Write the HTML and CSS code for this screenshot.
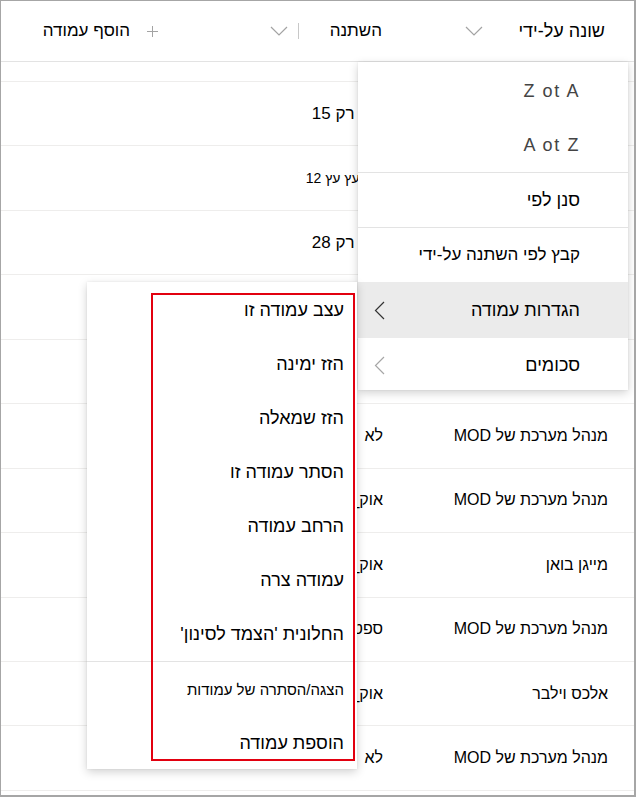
FILE: index.html
```html
<!DOCTYPE html>
<html lang="he" dir="rtl">
<head>
<meta charset="utf-8">
<title>עמודות</title>
<link rel="stylesheet" href="styles.css">
</head>
<body>
<div class="frame">
  <div class="grid">
    <div class="hrow">
      <div class="cell c1">
        <span class="htext">שונה על-ידי</span>
        <svg class="chev-down" width="18" height="10" viewBox="0 0 18 10"><path d="M1 1 L9 9 L17 1" fill="none" stroke="#a3a3a3" stroke-width="1.2"/></svg>
      </div>
      <div class="cell c2">
        <span class="htext">השתנה</span>
        <span class="fill"></span>
        <span class="vsep"></span>
        <svg class="chev-down" width="18" height="10" viewBox="0 0 18 10"><path d="M1 1 L9 9 L17 1" fill="none" stroke="#a3a3a3" stroke-width="1.2"/></svg>
      </div>
      <div class="cell c3">
        <svg class="plus" width="11" height="11" viewBox="0 0 11 11"><path d="M5.5 0 V11 M0 5.5 H11" fill="none" stroke="#a3a3a3" stroke-width="1"/></svg>
        <span class="htext">הוסף עמודה</span>
      </div>
    </div>
    <div class="row gaprow"></div>
    <div class="row"><div class="cell c1">מנהל מערכת של MOD</div><div class="cell c2 big">עוד רק 15</div><div class="cell c3"></div></div>
    <div class="row"><div class="cell c1">מנהל מערכת של MOD</div><div class="cell c2 small">עוד עץ עץ 12</div><div class="cell c3"></div></div>
    <div class="row"><div class="cell c1">מנהל מערכת של MOD</div><div class="cell c2 big">עוד רק 28</div><div class="cell c3"></div></div>
    <div class="row"><div class="cell c1">מנהל מערכת של MOD</div><div class="cell c2">לא</div><div class="cell c3"></div></div>
    <div class="row"><div class="cell c1">מנהל מערכת של MOD</div><div class="cell c2">לא</div><div class="cell c3"></div></div>
    <div class="row"><div class="cell c1">מנהל מערכת של MOD</div><div class="cell c2">לא</div><div class="cell c3"></div></div>
    <div class="row"><div class="cell c1">מנהל מערכת של MOD</div><div class="cell c2">אוק_15</div><div class="cell c3"></div></div>
    <div class="row"><div class="cell c1">מייגן בואן</div><div class="cell c2">אוק_12</div><div class="cell c3"></div></div>
    <div class="row"><div class="cell c1">מנהל מערכת של MOD</div><div class="cell c2">ספטמבר 28</div><div class="cell c3"></div></div>
    <div class="row"><div class="cell c1">אלכס וילבר</div><div class="cell c2">אוק_10</div><div class="cell c3"></div></div>
    <div class="row"><div class="cell c1">מנהל מערכת של MOD</div><div class="cell c2">לא</div><div class="cell c3"></div></div>
  </div>

  <div class="menu main-menu">
    <div class="item latin"><span class="rev">A to Z</span></div>
    <div class="item latin"><span class="rev">Z to A</span></div>
    <div class="sep"></div>
    <div class="item"><span>סנן לפי</span></div>
    <div class="sep"></div>
    <div class="item"><span class="tight">קבץ לפי השתנה על-ידי</span></div>
    <div class="item active">
      <span>הגדרות עמודה</span>
      <svg class="chev-left" width="11" height="19" viewBox="0 0 11 19"><path d="M10 1 L1.5 9.5 L10 18" fill="none" stroke="#333" stroke-width="1.2"/></svg>
    </div>
    <div class="item">
      <span>סכומים</span>
      <svg class="chev-left" width="11" height="19" viewBox="0 0 11 19"><path d="M10 1 L1.5 9.5 L10 18" fill="none" stroke="#a6a6a6" stroke-width="1.2"/></svg>
    </div>
  </div>

  <div class="menu sub-menu">
    <div class="item">עצב עמודה זו</div>
    <div class="item">הזז ימינה</div>
    <div class="item">הזז שמאלה</div>
    <div class="item">הסתר עמודה זו</div>
    <div class="item">הרחב עמודה</div>
    <div class="item">עמודה צרה</div>
    <div class="item">החלונית 'הצמד לסינון'</div>
    <div class="sep"></div>
    <div class="item small">הצגה/הסתרה של עמודות</div>
    <div class="item">הוספת עמודה</div>
    <div class="annot"></div>
  </div>
</div>
</body>
</html>
```

FILE: styles.css
```css
html, body {
  margin: 0;
  padding: 0;
  background: #ffffff;
}

.frame {
  position: relative;
  width: 636px;
  height: 797px;
  box-sizing: border-box;
  border: 1px solid #a6a6a6;
  border-right-width: 2px;
  border-bottom-width: 2px;
  overflow: hidden;
  direction: rtl;
  font-family: "Liberation Sans", "DejaVu Sans", sans-serif;
  font-size: 17px;
  color: #000;
}

.grid {
  display: flex;
  flex-direction: column;
}

.hrow {
  display: flex;
  height: 61px;
  box-sizing: border-box;
  border-bottom: 1px solid #e3e3e3;
}

.row {
  display: flex;
  height: 64.45px;
  box-sizing: border-box;
  border-bottom: 1px solid #eeedec;
  font-size: 16px;
}

.gaprow {
  height: 20px;
}

.cell {
  display: flex;
  align-items: center;
  white-space: nowrap;
  overflow: hidden;
  box-sizing: border-box;
}

.c1 {
  width: 210px;
  flex: none;
  padding-right: 26px;
  padding-left: 2px;
}

.c2 {
  width: 156px;
  flex: none;
  padding-right: 41px;
  padding-left: 2px;
}

.c3 {
  flex: 1;
}

.row .big {
  font-size: 17px;
}

.hrow .c1 {
  width: 171px;
  padding-right: 29px;
  justify-content: space-between;
  font-size: 18px;
}

.hrow .c2 {
  width: 195px;
  padding-right: 81px;
}

.hrow .c3 {
  padding-right: 110px;
}

.fill {
  flex: 1;
}

.vsep {
  width: 1px;
  height: 16px;
  background: #c8c8c8;
}

.chev-down {
  display: block;
  flex: none;
}

.hrow .c2 .chev-down {
  margin-right: 10px;
}

.plus {
  display: block;
  flex: none;
  margin-left: 17px;
}

.row .small {
  font-size: 14px;
}

.menu {
  position: absolute;
  background: #fff;
  box-shadow: 0 3px 9px rgba(0, 0, 0, 0.18), 0 0 2px rgba(0, 0, 0, 0.08);
  display: flex;
  flex-direction: column;
}

.main-menu {
  left: 357px;
  top: 61px;
  width: 270px;
  height: 328px;
  padding-top: 2px;
  box-sizing: border-box;
  font-size: 18px;
}

.main-menu .item {
  height: 54px;
  display: flex;
  align-items: center;
  justify-content: space-between;
  padding-right: 48px;
  padding-left: 16px;
  box-sizing: border-box;
  white-space: nowrap;
  flex: none;
}

.main-menu .latin {
  color: #444;
  letter-spacing: 1.6px;
}

.rev {
  unicode-bidi: bidi-override;
  direction: rtl;
}

.tight {
  font-size: 17px;
}

.main-menu .active {
  background: #ebebeb;
  height: 56px;
}

.sep {
  height: 1px;
  background: #e3e3e3;
  flex: none;
}

.sub-menu {
  left: 86px;
  top: 281px;
  width: 270px;
  height: 487px;
  padding-top: 1px;
  box-sizing: border-box;
  font-size: 18px;
}

.sub-menu .item {
  height: 54px;
  display: flex;
  align-items: center;
  padding-right: 13px;
  box-sizing: border-box;
  white-space: nowrap;
  flex: none;
}

.sub-menu .small {
  font-size: 15px;
}

.annot {
  position: absolute;
  left: 64px;
  top: 11px;
  width: 204px;
  height: 468px;
  box-sizing: border-box;
  border: 2px solid #e2000f;
}
```
